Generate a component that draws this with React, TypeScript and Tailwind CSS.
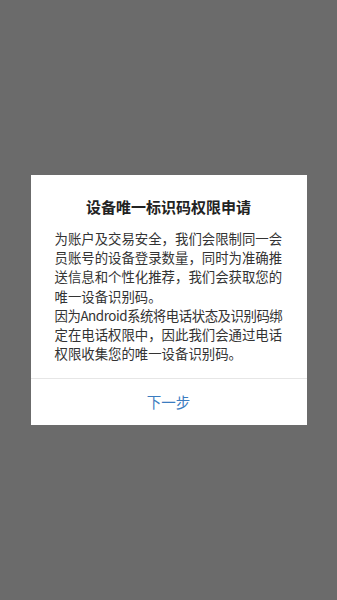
import React from 'react';

const FONT = '"Noto Sans CJK SC", "Noto Sans", sans-serif';

// line breaks follow the screenshot; the Android line is set a touch tighter to fit
const lines = [
    { text: '为账户及交易安全，我们会限制同一会', tight: false },
    { text: '员账号的设备登录数量，同时为准确推', tight: false },
    { text: '送信息和个性化推荐，我们会获取您的', tight: false },
    { text: '唯一设备识别码。', tight: false },
    { text: '因为Android系统将电话状态及识别码绑', tight: true },
    { text: '定在电话权限中，因此我们会通过电话', tight: false },
    { text: '权限收集您的唯一设备识别码。', tight: false },
];

const App: React.FC = () => {
    return (
        <div className="w-full h-[600px] bg-[#6b6b6b] flex items-center justify-center" style={{ fontFamily: FONT }}>
            <div className="w-[276px] h-[250px] bg-white flex flex-col">
                <div className="flex-1 px-[24px] pt-[21px]">
                    <h2 className="text-center text-[15px] leading-[22px] font-bold text-[#222]">设备唯一标识码权限申请</h2>
                    <div className="mt-[11px] text-[13.4px] leading-[19.2px] text-[#333]">
                        {lines.map(line => (
                            <div key={line.text} className={line.tight ? 'whitespace-nowrap tracking-[-0.45px]' : 'whitespace-nowrap'}>
                                {line.text}
                            </div>
                        ))}
                    </div>
                </div>
                <div className="h-px bg-[#e6e6e6]" />
                <button className="h-[46px] w-full text-[14.5px] text-[#3b7cc0]">下一步</button>
            </div>
        </div>
    );
};

export default App;
